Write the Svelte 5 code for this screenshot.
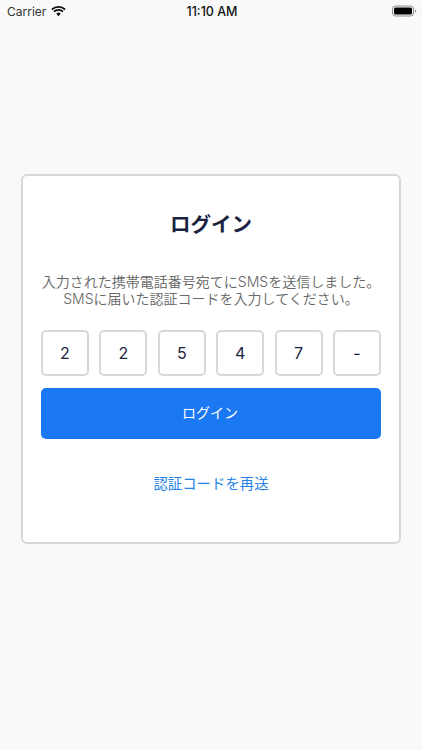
<script>
  const digits = ['2', '2', '5', '4', '7', '-'];
</script>

<div class="screen">
  <header class="status">
    <div class="left">
      <span>Carrier</span>
      <svg width="15" height="12" viewBox="0 0 16 12" aria-hidden="true">
        <path d="M8 11.6 5.6 8.9a3.4 3.4 0 0 1 4.8 0Z" fill="#111"/>
        <path d="M1 4.4a10 10 0 0 1 14 0M3.2 6.7a6.9 6.9 0 0 1 9.6 0" fill="none" stroke="#111" stroke-width="1.9"/>
      </svg>
    </div>
    <div class="time">11:10 AM</div>
    <div class="right">
      <svg width="25" height="12" viewBox="0 0 25 12" aria-hidden="true">
        <rect x="0.5" y="1" width="21" height="10" rx="3" fill="none" stroke="#8a8a8a"/>
        <rect x="2" y="2.5" width="18" height="7" rx="1.6" fill="#000"/>
        <path d="M23 4.4c.8.2 1.2.8 1.2 1.6s-.4 1.4-1.2 1.6Z" fill="#8a8a8a"/>
      </svg>
    </div>
  </header>

  <main class="center">
    <section class="card">
      <h1>ログイン</h1>
      <p>入力された携帯電話番号宛てにSMSを送信しました。<br />SMSに届いた認証コードを入力してください。</p>
      <div class="code">
        {#each digits as d}
          <div class="cell">{d}</div>
        {/each}
      </div>
      <button class="primary">ログイン</button>
      <button class="link">認証コードを再送</button>
    </section>
  </main>
</div>

<style>
  :global(body) {
    margin: 0;
    background: #f9f9f9;
  }
  .screen {
    width: 422px;
    height: 750px;
    display: flex;
    flex-direction: column;
    font-family: Inter, "Noto Sans CJK JP", sans-serif;
    overflow: hidden;
  }
  .status {
    height: 22px;
    display: grid;
    grid-template-columns: 1fr auto 1fr;
    align-items: center;
    padding: 0 5px 0 7px;
    font-size: 12px;
    color: #111;
  }
  .left {
    display: flex;
    align-items: center;
    gap: 5px;
    color: #333;
  }
  .left svg {
    margin-top: -1px;
  }
  .time {
    font-size: 12.5px;
    font-weight: 500;
  }
  .right {
    display: flex;
    justify-content: flex-end;
  }
  .center {
    flex: 1;
    padding-top: 152px;
    display: flex;
    justify-content: center;
    align-items: flex-start;
  }
  .card {
    box-sizing: border-box;
    width: 380px;
    height: 370px;
    background: #fff;
    border: 2px solid #d8d8d8;
    border-radius: 6px;
    padding: 35px 18px 0;
    display: flex;
    flex-direction: column;
    align-items: stretch;
  }
  h1 {
    margin: 0;
    font-size: 20.5px;
    line-height: 28px;
    font-weight: 600;
    color: #1a2340;
    text-align: center;
  }
  p {
    margin: 34px 0 0;
    font-size: 14px;
    line-height: 17px;
    font-weight: 350;
    color: #666;
    text-align: center;
    white-space: nowrap;
  }
  .code {
    margin-top: 23px;
    display: flex;
    justify-content: space-between;
  }
  .cell {
    box-sizing: border-box;
    width: 48px;
    height: 46px;
    border: 2px solid #d8d8d8;
    border-radius: 5px;
    display: flex;
    align-items: center;
    justify-content: center;
    font-size: 16px;
    color: #1a2340;
  }
  .primary {
    margin-top: 12px;
    height: 51px;
    border: none;
    border-radius: 5px;
    background: #1a78f2;
    color: #fff;
    font: inherit;
    font-size: 14px;
    font-weight: 400;
    padding: 0 2px 3px 0;
  }
  .link {
    margin-top: 34px;
    border: none;
    background: none;
    color: #2583e6;
    font: inherit;
    font-size: 14.4px;
    line-height: 22px;
    padding: 0;
  }
</style>
